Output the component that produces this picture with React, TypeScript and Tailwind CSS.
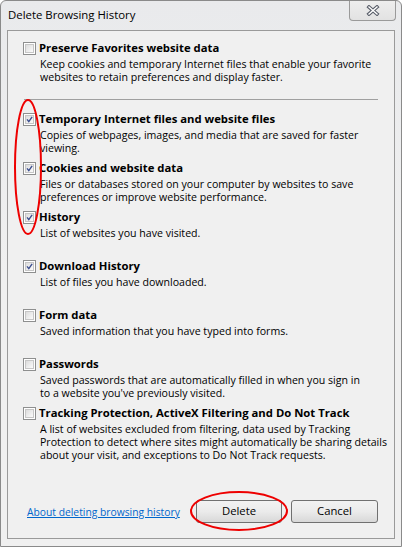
import React from "react";

const font = { fontFamily: '"Open Sans", "Noto Sans", sans-serif' };

function Checkbox({ checked }: { checked: boolean }) {
  return (
    <div className="w-[13px] h-[13px] shrink-0 border border-[#8e8f8f] bg-white p-[1px]">
      <div className="w-full h-full border border-[#c6c6c6] bg-gradient-to-br from-[#dcdcdc] to-[#fbfbfb] relative">
        {checked && (
          <svg viewBox="0 0 9 9" className="absolute inset-0 w-full h-full">
            <path d="M1.3 4.4 L3.6 7.2 L7.9 1.2" fill="none" stroke="#3c4f8f" strokeWidth="1.8" />
          </svg>
        )}
      </div>
    </div>
  );
}

function Item({
  checked,
  title,
  desc,
}: {
  checked: boolean;
  title: string;
  desc: string[];
}) {
  return (
    <div className="h-[49px] flex flex-col">
      <div className="flex items-center gap-[3px] h-[16px]">
        <Checkbox checked={checked} />
        <span className="font-bold text-[11.3px] leading-[16px] text-black whitespace-nowrap">{title}</span>
      </div>
      <div className="ml-[17px] mt-[2px] text-[10.6px] leading-[13px] text-black">
        {desc.map((d, i) => (
          <div key={i} className="whitespace-nowrap">
            {d}
          </div>
        ))}
      </div>
    </div>
  );
}

export default function App() {
  return (
    <div
      style={font}
      className="w-[402px] h-[547px] relative bg-gradient-to-b from-[#e9eaec] via-[#f0f0f0] to-[#f0f0f0] border border-[#8a8a8a] rounded-t-[6px] flex flex-col overflow-hidden"
    >
      {/* title bar */}
      <div className="h-[29px] flex items-start justify-between">
        <div className="pl-[7px] pt-[6px] text-[11.4px] leading-[16px] text-black">Delete Browsing History</div>
        <div className="mr-[5px] w-[47px] h-[20px] border border-t-0 border-[#9a9a9a] rounded-b-[4px] bg-gradient-to-b from-[#eeeeee] to-[#e2e2e2] flex items-center justify-center">
          <svg width="14" height="11" viewBox="0 0 14 11">
            <path d="M3 2 L11 9 M11 2 L3 9" stroke="#5a5f6a" strokeWidth="3.6" strokeLinecap="square" />
            <path d="M3 2 L11 9 M11 2 L3 9" stroke="#ffffff" strokeWidth="1.4" strokeLinecap="square" />
          </svg>
        </div>
      </div>

      {/* client area */}
      <div className="mx-[6px] h-[509px] border border-[#9a9a9a] bg-[#f0f0f0] flex flex-col pl-[15px] pt-[9px] pr-[16px]">
        <Item
          checked={false}
          title="Preserve Favorites website data"
          desc={[
            "Keep cookies and temporary Internet files that enable your favorite",
            "websites to retain preferences and display faster.",
          ]}
        />
        <div className="mt-[10px] h-[1px] bg-[#a0a0a0] ml-[1px]" />
        <div className="mt-[11px] flex flex-col">
          <Item
            checked={true}
            title="Temporary Internet files and website files"
            desc={["Copies of webpages, images, and media that are saved for faster", "viewing."]}
          />
          <Item
            checked={true}
            title="Cookies and website data"
            desc={[
              "Files or databases stored on your computer by websites to save",
              "preferences or improve website performance.",
            ]}
          />
          <Item checked={true} title="History" desc={["List of websites you have visited."]} />
          <Item checked={true} title="Download History" desc={["List of files you have downloaded."]} />
          <Item checked={false} title="Form data" desc={["Saved information that you have typed into forms."]} />
          <Item
            checked={false}
            title="Passwords"
            desc={[
              "Saved passwords that are automatically filled in when you sign in",
              "to a website you've previously visited.",
            ]}
          />
          <Item
            checked={false}
            title="Tracking Protection, ActiveX Filtering and Do Not Track"
            desc={[
              "A list of websites excluded from filtering, data used by Tracking",
              "Protection to detect where sites might automatically be sharing details",
              "about your visit, and exceptions to Do Not Track requests.",
            ]}
          />
        </div>

        {/* bottom buttons */}
        <div className="mt-auto mb-[15px] flex items-center">
          <a className="ml-[4px] text-[10.3px] leading-[16px] text-[#0066cc] underline cursor-pointer whitespace-nowrap">
            About deleting browsing history
          </a>
          <div className="ml-auto flex gap-[9px]">
            <button className="w-[86px] h-[23px] border border-[#707070] rounded-[3px] bg-gradient-to-b from-[#f2f2f2] via-[#ebebeb] to-[#d8d8d8] text-[11.3px] text-black">
              Delete
            </button>
            <button className="w-[87px] h-[23px] border border-[#707070] rounded-[3px] bg-gradient-to-b from-[#f2f2f2] via-[#ebebeb] to-[#d8d8d8] text-[11.3px] text-black">
              Cancel
            </button>
          </div>
        </div>
      </div>
      <div className="h-[7px]" />

      {/* red annotation ellipses */}
      <svg className="absolute left-0 top-0 pointer-events-none" width="402" height="547">
        <ellipse cx="27" cy="166" rx="13" ry="67" fill="none" stroke="#ee0000" strokeWidth="2" />
        <ellipse cx="238" cy="510" rx="48" ry="19" fill="none" stroke="#ee0000" strokeWidth="2" />
      </svg>
    </div>
  );
}
